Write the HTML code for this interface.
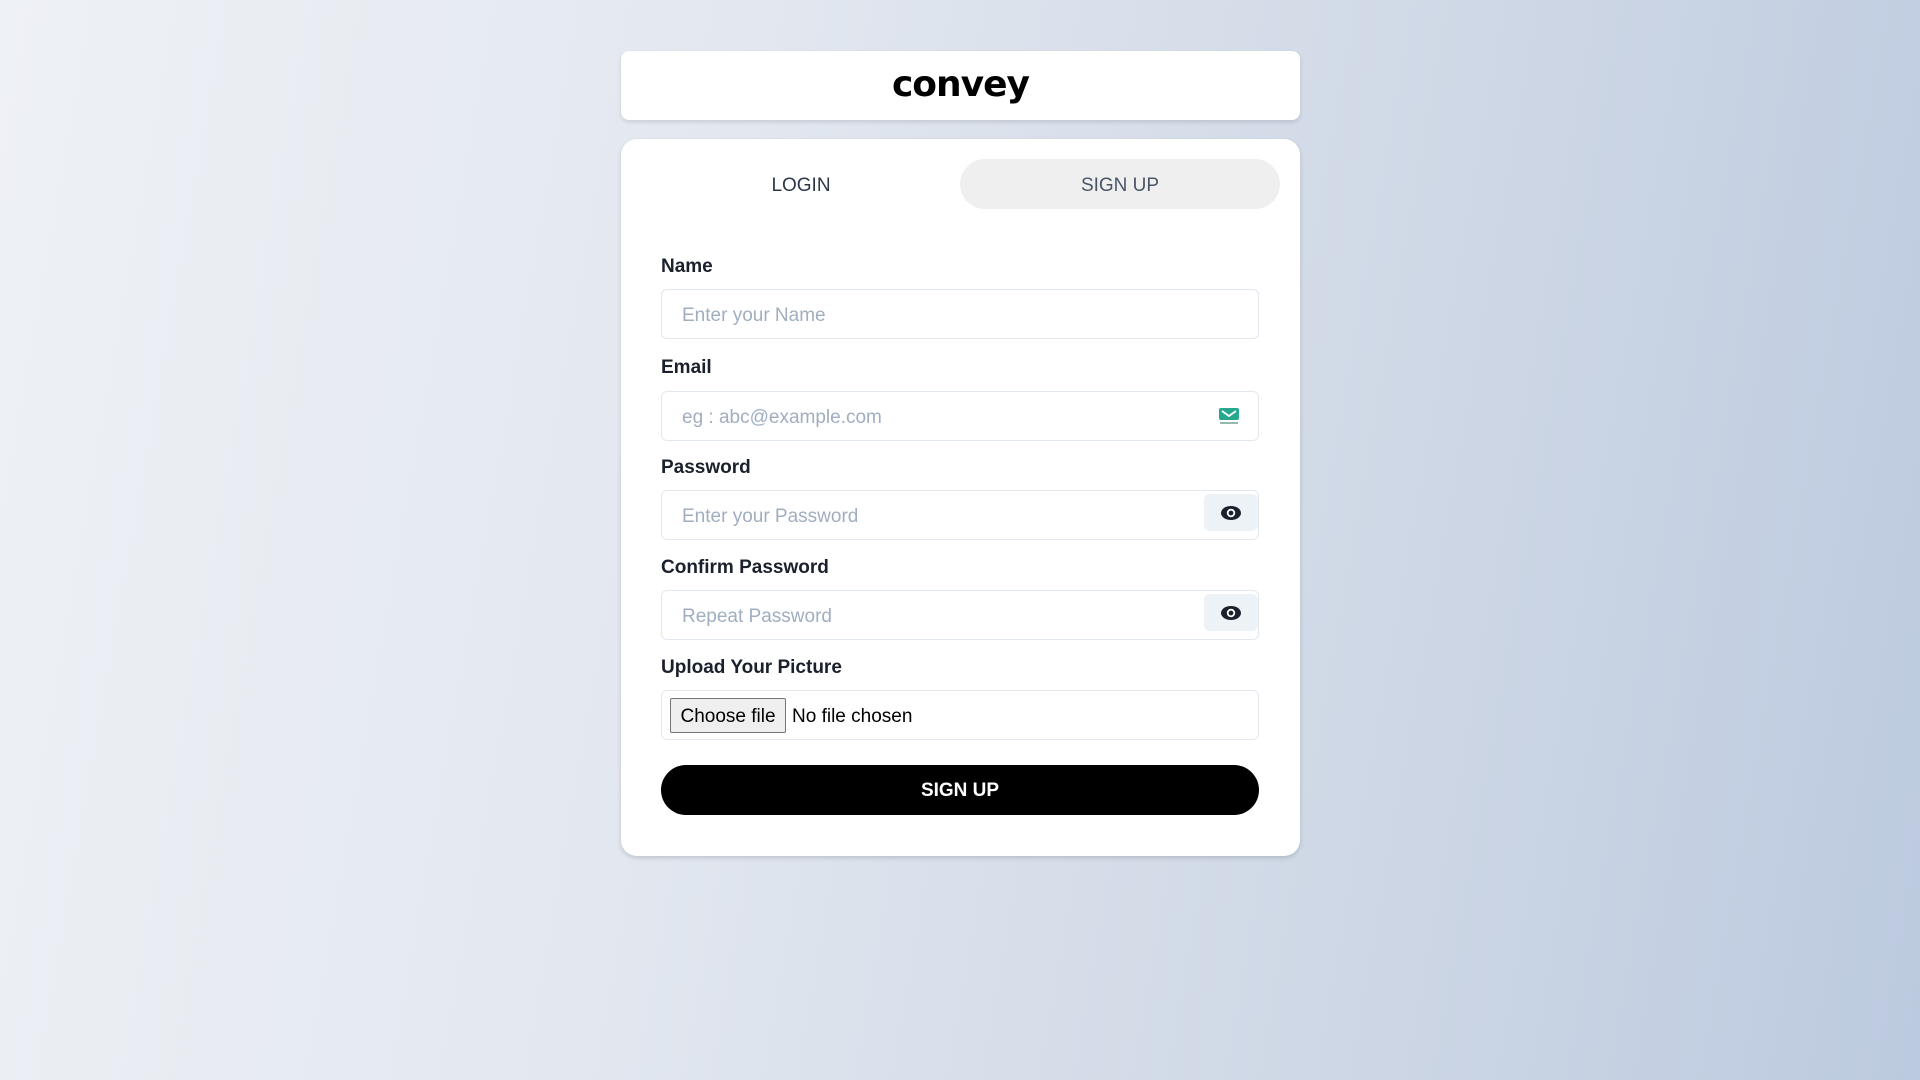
<!DOCTYPE html>
<html><head><meta charset="utf-8"><style>
*{box-sizing:border-box;margin:0;padding:0}
body{width:1920px;height:1080px;overflow:hidden;font-family:"Liberation Sans",sans-serif;background:linear-gradient(100deg,#eef1f5 0%,#e3e8f0 35%,#cfd8e6 70%,#bccadf 100%);position:relative}
.hdr{position:absolute;left:621px;top:51px;width:679px;height:69px;background:#fff;border-radius:8px;box-shadow:0 2px 4px rgba(0,0,0,.12);text-align:center}
.logo{font-family:"DejaVu Sans","Liberation Sans",sans-serif;font-size:36px;font-weight:700;letter-spacing:-1px;line-height:68px;color:#000}
.card{position:absolute;left:621px;top:139px;width:679px;height:717px;background:#fff;border-radius:16px;box-shadow:0 2px 5px rgba(0,0,0,.15)}
.tab{position:absolute;top:20px;height:50px;width:320px;border-radius:25px;font-size:19px;color:#2d3748;text-align:center;line-height:53px}
.t1{left:20px}.t2{left:339px;background:#efefef;color:#4a5568}
.lbl{position:absolute;left:40px;font-size:19px;font-weight:600;color:#1a202c;margin-top:2px}
.inp{position:absolute;left:40px;width:598px;height:50px;border:1px solid #e2e8f0;border-radius:6px;font-size:19px;color:#a0aec0;padding-left:20px;line-height:52px}
.eye{position:absolute;right:0;top:3px;width:54px;height:37px;background:#edf2f7;border-radius:6px;display:flex;align-items:center;justify-content:center}
.btn{position:absolute;left:40px;top:626px;width:598px;height:50px;background:#000;border-radius:25px;color:#fff;font-weight:700;font-size:19px;text-align:center;line-height:52px}
.cf{position:absolute;left:8px;top:7px;height:35px;width:116px;background:#efefef;border:1px solid #767676;border-radius:2px;color:#000;font-size:19px;line-height:35px;text-align:center}
</style></head><body>
<div class="hdr"><div class="logo">convey</div></div>
<div class="card">
<div class="tab t1">LOGIN</div><div class="tab t2">SIGN UP</div>
<div class="lbl" style="top:115px">Name</div>
<div class="inp" style="top:150px">Enter your Name</div>
<div class="lbl" style="top:216px">Email</div>
<div class="inp" style="top:252px">eg : abc@example.com
<svg style="position:absolute;right:18px;top:15px" width="22" height="18" viewBox="0 0 22 18"><rect x="1" y="1" width="20" height="12" rx="2" fill="#26a88f"/><path d="M4 4l7 5 7-5" stroke="#fff" stroke-width="1.8" fill="none"/><rect x="2" y="15" width="18" height="2" fill="#4a8a7e" opacity=".6"/></svg></div>
<div class="lbl" style="top:316px">Password</div>
<div class="inp" style="top:351px">Enter your Password<div class="eye"><svg width="22" height="16" viewBox="0 0 22 16"><ellipse cx="11" cy="8" rx="10" ry="7" fill="#1a202c"/><circle cx="11" cy="8" r="3.3" fill="none" stroke="#fff" stroke-width="1.8"/></svg></div></div>
<div class="lbl" style="top:416px">Confirm Password</div>
<div class="inp" style="top:451px">Repeat Password<div class="eye"><svg width="22" height="16" viewBox="0 0 22 16"><ellipse cx="11" cy="8" rx="10" ry="7" fill="#1a202c"/><circle cx="11" cy="8" r="3.3" fill="none" stroke="#fff" stroke-width="1.8"/></svg></div></div>
<div class="lbl" style="top:516px">Upload Your Picture</div>
<div class="inp" style="top:551px;color:#000;padding-left:130px">No file chosen<div class="cf">Choose file</div></div>
<div class="btn">SIGN UP</div>
</div>
</body></html>
